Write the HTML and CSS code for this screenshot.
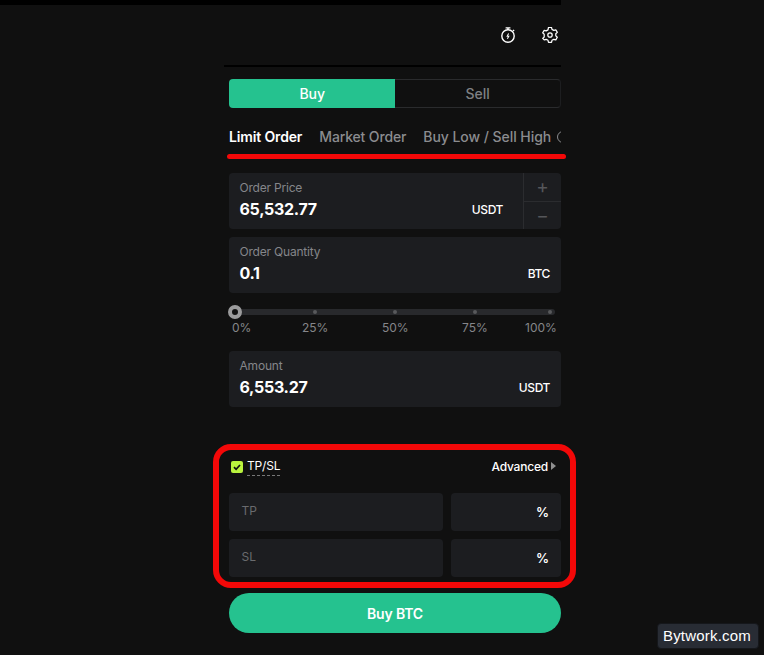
FILE: index.html
```html
<!DOCTYPE html>
<html lang="en">
<head>
<meta charset="utf-8">
<title>Order panel</title>
<link rel="stylesheet" href="styles.css">
</head>
<body>
<div class="topbar"></div>
<div class="stage">
  <main class="panel">
    <header class="head">
      <svg class="icon" viewBox="0 0 16 16" width="16" height="16" fill="none" stroke="#fff" stroke-width="1.4"><circle cx="8" cy="9" r="6.2"/><path d="M5.6 .9h4.8M8 1v2M13 2.9l1.1 1.1"/><path d="M8.6 6.6L7.2 9.2h1.6L7.4 11.8" stroke-width="1.05"/></svg>
      <svg class="icon" viewBox="0 0 16 16" width="16" height="16" fill="none" stroke="#fff" stroke-width="1.25" stroke-linejoin="round"><path d="M6.5 1h3l.5 2 1.8 1 2-.6 1.5 2.6-1.5 1.4v2.1l1.5 1.4-1.5 2.6-2-.6-1.8 1-.5 2h-3l-.5-2-1.8-1-2 .6L.7 12l1.5-1.4V7.9L.7 6.5l1.5-2.6 2 .6L6 3.5z" transform="translate(0 -.6)"/><circle cx="8" cy="8" r="2.2"/></svg>
    </header>
    <div class="side">
      <div class="side-active">Buy</div>
      <div class="side-idle">Sell</div>
    </div>
    <nav class="types">
      <span class="type active">Limit Order</span>
      <span class="type">Market Order</span>
      <span class="type">Buy Low / Sell High</span>
      <span class="type-clip"></span>
    </nav>
    <section class="field with-step">
      <div class="field-body">
        <div class="label">Order Price</div>
        <div class="row"><span class="value">65,532.77</span><span class="unit">USDT</span></div>
      </div>
      <div class="stepper">
        <div class="step">+</div>
        <div class="step">−</div>
      </div>
    </section>
    <section class="field">
      <div class="field-body">
        <div class="label">Order Quantity</div>
        <div class="row"><span class="value">0.1</span><span class="unit">BTC</span></div>
      </div>
    </section>
    <div class="slider">
      <div class="track">
        <span class="knob"></span>
        <span class="dot"></span>
        <span class="dot"></span>
        <span class="dot"></span>
        <span class="dot"></span>
      </div>
      <div class="marks">
        <span>0%</span><span>25%</span><span>50%</span><span>75%</span><span>100%</span>
      </div>
    </div>
    <section class="field">
      <div class="field-body">
        <div class="label">Amount</div>
        <div class="row"><span class="value">6,553.27</span><span class="unit">USDT</span></div>
      </div>
    </section>
    <div class="tpsl-head">
      <div class="tpsl-left">
        <span class="check"><svg viewBox="0 0 12 12" width="12" height="12" fill="none" stroke="#111" stroke-width="1.7"><path d="M3 6.2l2.1 2.1L9 4"/></svg></span>
        <span class="tpsl-title">TP/SL</span>
      </div>
      <div class="advanced">Advanced<span class="caret"></span></div>
    </div>
    <div class="tp-row">
      <div class="tp-input">TP</div>
      <div class="tp-pct">%</div>
    </div>
    <div class="tp-row">
      <div class="tp-input">SL</div>
      <div class="tp-pct">%</div>
    </div>
    <button class="buy" type="button">Buy BTC</button>
  </main>
</div>
<div class="mark-line"></div>
<div class="mark-box"></div>
<div class="watermark">Bytwork.com</div>
</body>
</html>
```
FILE: styles.css
```css
* { box-sizing: border-box; }
html, body { margin: 0; height: 100%; }
body {
  width: 764px;
  height: 655px;
  overflow: hidden;
  position: relative;
  background: #101010;
  color: #fff;
  font-family: Inter, "Liberation Sans", sans-serif;
}
.topbar { height: 5px; width: 561px; background: #000; }
.stage { padding-left: 229px; }
.panel { width: 332px; display: flex; flex-direction: column; }
.head {
  height: 62px;
  margin-left: -5px;
  border-bottom: 2px solid #000;
  display: flex;
  justify-content: flex-end;
  align-items: center;
  gap: 26px;
  padding-right: 3px;
}
.icon { display: block; }
.side {
  margin-top: 12px;
  height: 29px;
  display: flex;
  font-size: 14px;
  font-weight: 500;
}
.side-active, .side-idle { flex: 1; display: flex; align-items: center; justify-content: center; padding-left: 1px; }
.side-active { background: #25c28f; border-radius: 4px 0 0 4px; }
.side-idle {
  color: #7f8083;
  border: 1px solid #2a2b2d;
  border-left: 0;
  border-right-color: #1d1e20;
  border-radius: 0 4px 4px 0;
}
.types {
  height: 57px;
  display: flex;
  gap: 17px;
  align-items: flex-start;
  padding-top: 20px;
  font-size: 14px;
  line-height: 17px;
  font-weight: 500;
  letter-spacing: -0.15px;
  white-space: nowrap;
  overflow: hidden;
  color: #8b8c8f;
}
.type { flex: none; }
.type:nth-child(3) { letter-spacing: -0.05px; }
.type.active { color: #fff; font-weight: 600; }
.type-clip {
  width: 12px;
  height: 12px;
  margin: 3px 0 0 -11px;
  border: 1.5px solid #8b8c8f;
  border-radius: 50%;
  flex: none;
}
.field { height: 56px; background: #1c1d20; border-radius: 4px; display: flex; margin-top: 8px; }
.field-body { flex: 1; padding: 8px 11px 0 10.5px; min-width: 0; }
.label { font-size: 12px; line-height: 14px; color: #85868a; letter-spacing: -0.2px; }
.row { display: flex; justify-content: space-between; align-items: center; margin-top: 3px; height: 22px; }
.value { font-size: 16px; font-weight: 700; letter-spacing: -0.3px; }
.unit { font-size: 12px; font-weight: 500; letter-spacing: -0.4px; }
.with-step .field-body { padding-right: 20px; }
.stepper { width: 38px; border-left: 1px solid #2b2c2f; display: flex; flex-direction: column; }
.step { flex: 1; display: flex; align-items: center; justify-content: center; font-size: 19px; color: #55565a; }
.step + .step { border-top: 1px solid #2b2c2f; }
.slider { margin-top: 16px; height: 34px; }
.track {
  height: 6px;
  margin-right: 6px;
  border-radius: 3px;
  background: #28292c;
  position: relative;
  display: flex;
  align-items: center;
  padding-left: 84px;
}
.dot { flex: none; width: 4px; height: 4px; border-radius: 50%; background: #58595c; margin-right: 76px; }
.dot:nth-last-child(2) { margin-right: 71px; }
.dot:last-child { margin-right: 0; }
.knob {
  position: absolute;
  left: -1px;
  top: -4px;
  width: 14px;
  height: 14px;
  border-radius: 50%;
  border: 4px solid #9b9b9c;
  background: #111;
}
.marks {
  display: grid;
  grid-template-columns: 70px 80px 80px 63px auto;
  margin-top: 6px;
  padding-left: 3px;
  font-size: 12px;
  line-height: 14px;
  color: #85868a;
}
.tpsl-head {
  margin-top: 49px;
  height: 20px;
  display: flex;
  justify-content: space-between;
  align-items: center;
  margin-left: 2px;
  font-size: 12px;
  font-weight: 500;
  letter-spacing: -0.2px;
}
.tpsl-left { display: flex; align-items: center; gap: 4px; }
.check { width: 12px; height: 12px; border-radius: 2px; background: #b9f23e; display: block; margin-top: 1px; }
.check svg { display: block; }
.tpsl-title { border-bottom: 1px dashed #777; padding-bottom: 2px; margin-top: 2px; line-height: 14px; font-weight: 400; }
.advanced { display: flex; align-items: center; gap: 3px; padding-right: 5px; }
.caret {
  width: 0;
  height: 0;
  border-left: 5px solid #8f8f8f;
  border-top: 4.5px solid transparent;
  border-bottom: 4.5px solid transparent;
}
.tp-row { display: flex; gap: 8px; height: 38px; }
.tpsl-head + .tp-row { margin-top: 17px; }
.tp-row + .tp-row { margin-top: 8px; }
.tp-input, .tp-pct { background: #1c1d20; border-radius: 4px; font-size: 12px; }
.tp-input { flex: 1; color: #6a6b6e; padding: 11px 12.5px; line-height: 14px; }
.tp-pct {
  width: 110px;
  display: flex;
  align-items: center;
  justify-content: flex-end;
  padding-right: 12px;
  font-size: 13px;
  font-weight: 600;
}
.buy {
  margin-top: 16px;
  height: 40px;
  border: 0;
  border-radius: 20px;
  background: #25c28f;
  color: #fff;
  font: 600 14px Inter, "Liberation Sans", sans-serif;
  letter-spacing: -0.15px;
}
.mark-line { position: absolute; left: 227px; top: 154px; width: 339px; height: 5px; border-radius: 3px; background: #f30808; }
.mark-box { position: absolute; left: 213px; top: 444px; width: 363px; height: 144px; border: 6px solid #f30808; border-radius: 18px; }
.watermark {
  position: absolute;
  left: 657px;
  top: 623px;
  width: 102px;
  height: 26px;
  padding-right: 2px;
  background: #282c34;
  border: 1px solid #15171b;
  border-radius: 4px;
  color: #fff;
  font: 15px/24px "Liberation Sans", sans-serif;
  letter-spacing: 0.2px;
  text-align: center;
}
```
